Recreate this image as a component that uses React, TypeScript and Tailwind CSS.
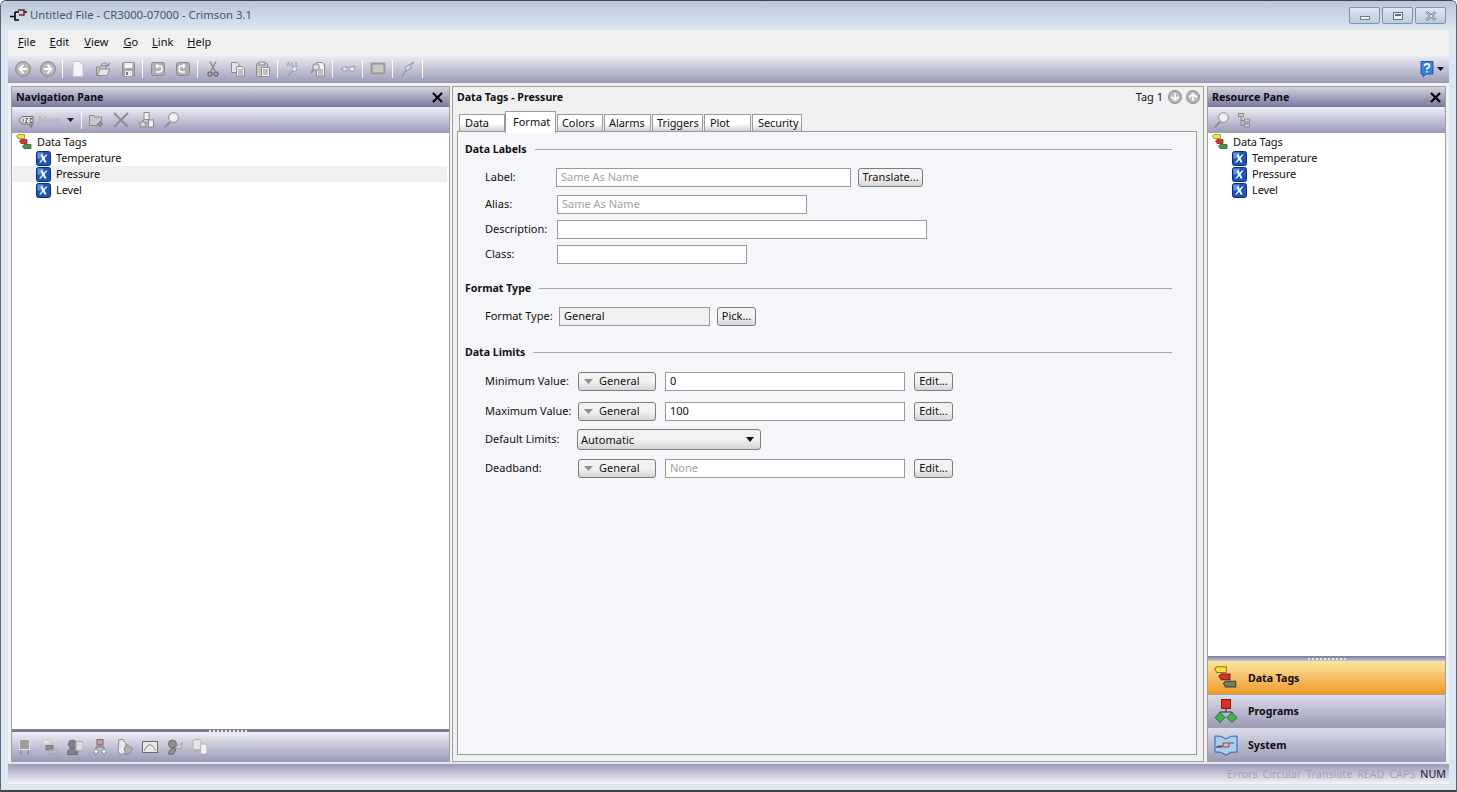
import type { ReactNode } from 'react';

const FONT = "font-['Noto_Sans','Liberation_Sans',sans-serif]";

function Gray({ children, w = 16, h = 16 }: { children: ReactNode; w?: number; h?: number }) {
  return (
    <svg width={w} height={h} viewBox={`0 0 ${w} ${h}`} fill="#cfcfcf" stroke="#8b8b8b" strokeWidth="1">
      {children}
    </svg>
  );
}

function Arrow({ dir, size = 16 }: { dir: 'left' | 'right' | 'up' | 'down'; size?: number }) {
  const rot = { left: 0, right: 180, up: 90, down: 270 }[dir];
  return (
    <svg width={size} height={size} viewBox="0 0 17 17">
      <circle cx="8.5" cy="8.5" r="8" fill="#a9a9a9" stroke="#8f8f8f" />
      <circle cx="8.5" cy="8.5" r="6.5" fill="#bcbcbc" />
      <path
        d="M9 4 L5 8.5 L9 13 M5.5 8.5 H13"
        fill="none"
        stroke="#fff"
        strokeWidth="2"
        transform={`rotate(${rot} 8.5 8.5)`}
      />
    </svg>
  );
}

const toolIcons: Record<string, ReactNode> = {
  page: <Gray><path d="M3 0.5 H10 L13 3.5 V15.5 H3 Z" fill="#f4f4f4" stroke="#c4c4c4" /></Gray>,
  open: <Gray><path d="M1.5 6 H5 L6 4.5 H11 V14.5 H1.5 Z" fill="#c4c4c4" /><path d="M2.5 14.5 L5 8 H15 L12 14.5 Z" fill="#e6e6e6" /><path d="M6 4 Q10 -1 13 5 M13 5 L14.5 2 M13 5 L10 4.5" fill="none" strokeWidth="1.2" /></Gray>,
  save: <Gray><rect x="2.5" y="1.5" width="12" height="13.5" rx="1" fill="#a9a9a9" /><rect x="4.5" y="2" width="8" height="5" fill="#f2f2f2" stroke="none" /><rect x="5" y="10" width="7" height="5" fill="#ececec" stroke="none" /><rect x="6" y="11" width="2" height="3" fill="#777" stroke="none" /></Gray>,
  undo: <Gray><rect x="1.5" y="1.5" width="13" height="13" rx="2" fill="#b0b0b0" /><path d="M6 5 H10 Q12 5 12 8 Q12 11 9 11 H6 M6 5 L8 3 M6 5 L8 7" fill="none" stroke="#fff" strokeWidth="1.4" /></Gray>,
  redo: <Gray><rect x="1.5" y="1.5" width="13" height="13" rx="2" fill="#b0b0b0" /><path d="M10 5 H6 Q4 5 4 8 Q4 11 7 11 H10 M10 5 L8 3 M10 5 L8 7" fill="none" stroke="#fff" strokeWidth="1.4" /></Gray>,
  cut: <Gray><path d="M5 0.5 L10 10 M11 0.5 L6 10" fill="none" stroke="#8a8a8a" strokeWidth="1.4" /><circle cx="5" cy="13" r="2" fill="none" stroke="#6f6f6f" strokeWidth="1.4" /><circle cx="11" cy="13" r="2" fill="none" stroke="#6f6f6f" strokeWidth="1.4" /></Gray>,
  copy: <Gray><path d="M1.5 1.5 H7 L9 3.5 V11.5 H1.5 Z" fill="#e4e4e4" /><path d="M6.5 5.5 H12 L14.5 8 V15 H6.5 Z" fill="#f0f0f0" /><path d="M8 9 H13 M8 11 H13 M8 13 H13" fill="none" /></Gray>,
  paste: <Gray><rect x="1.5" y="2.5" width="11" height="13" rx="1" fill="#c4c4c4" /><rect x="4" y="1" width="6" height="3" fill="#e2e2e2" /><path d="M6.5 6.5 H14.5 V15.5 H6.5 Z" fill="#f4f4f4" /><path d="M8 9 H13 M8 11 H13 M8 13 H13" fill="none" /></Gray>,
  findall: <Gray><path d="M9 8 L3 15" fill="none" stroke="#a4a4a4" strokeWidth="1.6" /><circle cx="9.5" cy="8" r="2.3" fill="#eee" stroke="#aaa" /><path d="M2 5 L3.5 1 L5 5 M7 1 V5 H9 M11 1 V5 H13" fill="none" stroke="#9a9a9a" /></Gray>,
  finddoc: <Gray><path d="M6.5 1.5 H12 L14.5 4 V15 H6.5 Z" fill="#f2f2f2" /><path d="M8 9 H13 M8 11 H13 M8 13 H13" fill="none" /><circle cx="6" cy="6" r="3.3" fill="#ddd" /><path d="M3.5 8.5 L1 12" fill="none" strokeWidth="1.6" /></Gray>,
  eye: <Gray><path d="M1 8 L4 6 H7 L9 7 L12 5 H15 V9 L12 11 L9 9 L7 10 H4 Z" fill="#c2c2c2" stroke="#a2a2a2" /><circle cx="4.5" cy="8" r="1.2" fill="#f4f4f4" stroke="none" /><circle cx="12" cy="8" r="1.6" fill="#f4f4f4" stroke="none" /></Gray>,
  screen: <Gray><rect x="1" y="2" width="14" height="11" fill="#8e8e8e" stroke="#a4a4a4" /><rect x="2.5" y="3.5" width="11" height="8" fill="#c8c8c8" stroke="none" /><path d="M1 14.5 H15" fill="none" stroke="#bbb" /></Gray>,
  bolt: <Gray><path d="M2 15.5 L6 9 M6 10.5 L5.5 6 L14 1 L10 5.5 L11.5 6.5 L6 10.5" fill="#ddd" stroke="#8e8e8e" /></Gray>,
  tag123: <Gray><path d="M1 8 L4 4.5 H15 V12 H4 Z" fill="#e8e8e8" stroke="#666" /><path d="M5 6.5 V10.5 M7.5 6.5 H9.5 L7.5 10.5 H9.5 M11.5 6.5 H14 L12 8.5 L14 10.5 H11.5" fill="none" stroke="#555" strokeWidth="1" /><path d="M13 12 V16 M11 14 H15" fill="none" stroke="#777" /></Gray>,
  newfolder: <Gray><path d="M1.5 3.5 H6 L7 5 H13.5 V13.5 H1.5 Z" fill="#c8c8c8" /><path d="M12 9 V15 M9 12 H15" fill="none" stroke="#8e8e8e" strokeWidth="2" /></Gray>,
  del: <Gray><path d="M1 1 L15 15 M15 1 L1 15" fill="none" stroke="#8e8e8e" strokeWidth="2" /></Gray>,
  order: <Gray><path d="M5 8 L6.3 11 H9.5 L7 13 L8 16 L5 14.3 L2 16 L3 13 L0.5 11 H3.7 Z" fill="#ddd" /><rect x="6" y="0.5" width="5" height="7" fill="#f2f2f2" /><rect x="10.5" y="8" width="5" height="7" fill="#f2f2f2" /></Gray>,
  find: <Gray><path d="M7 10 L1.5 15.5" fill="none" stroke="#8f8f8f" strokeWidth="2" /><circle cx="10.5" cy="5.5" r="4.8" fill="#f0f0f0" stroke="#8a8a8a" /></Gray>,
  treeview: <Gray w={13} h={16}><rect x="0.5" y="1.5" width="5" height="3" fill="#ccc" /><rect x="6.5" y="7" width="5" height="3" fill="#ccc" /><rect x="6.5" y="12" width="5" height="3" fill="#ccc" /><path d="M3 5 V13.5 H6 M3 8.5 H6" fill="none" /></Gray>,
  b1: <Gray><rect x="2.5" y="0.5" width="10" height="10" fill="#9f9f9f" stroke="#e4e4e4" /><path d="M4 11 V16 M11 11 V16" fill="none" stroke="#8a8a8a" strokeWidth="1.3" /></Gray>,
  b2: <Gray><rect x="1" y="1" width="7" height="4" fill="#e4e4e4" stroke="#ccc" /><rect x="4" y="6.5" width="7" height="4.5" fill="#8d8d8d" stroke="#808080" /><rect x="8" y="11" width="7.5" height="4" fill="#bcbcbc" stroke="#a4a4a4" /></Gray>,
  b3: <Gray><circle cx="5.5" cy="5" r="4" fill="#838383" stroke="#6c6c6c" /><path d="M0.5 15.5 Q0.5 9 5.5 9 Q10.5 9 10.5 15.5 Z" fill="#838383" stroke="#6c6c6c" /><rect x="9" y="2.5" width="7" height="9" fill="#ddd" stroke="#aaa" /></Gray>,
  b4: <Gray><rect x="5" y="0.5" width="6" height="5.5" fill="#aaa" stroke="#a15a50" /><path d="M8 6 V8 M4 10 V8 H12 V10" fill="none" stroke="#777" /><path d="M4 9.5 L6.5 12.5 L4 15.5 L1.5 12.5 Z M12 9.5 L14.5 12.5 L12 15.5 L9.5 12.5 Z" fill="#eee" stroke="#888" /></Gray>,
  b5: <Gray><path d="M2 0.5 H6 L9 5 V14 L3 15.5 L1 12 Z" fill="#e8e8e8" /><path d="M7 9 L11 5.5 L15.5 10 L13 14.5 L9 15.5 Z" fill="#b0b0b0" /></Gray>,
  b6: <Gray><rect x="0.5" y="2.5" width="15" height="11" fill="#e8e8e8" stroke="#6c6c6c" /><path d="M2 12 Q8 -1 14 12" fill="none" stroke="#8f8f8f" /></Gray>,
  b7: <Gray><circle cx="5.5" cy="5" r="4" fill="#909090" stroke="#6c6c6c" /><path d="M1.5 15 Q2.5 9 7 9 L9 11 L6 15.5 Z" fill="#909090" stroke="#6c6c6c" /><path d="M8 9 L15.5 3.5 L13.5 10 Z" fill="#ddd" stroke="#a0a0a0" /></Gray>,
  b8: <Gray><rect x="1" y="0.5" width="8" height="10" rx="2" fill="#e6e6e6" stroke="#b4b4b4" /><rect x="8.5" y="5" width="6.5" height="10" rx="2" fill="#f0f0f0" stroke="#b4b4b4" /></Gray>,
};

function Sep({ w = 5 }: { w?: number }) {
  return (
    <div className="flex h-[18px] justify-center" style={{ width: w }}>
      <div className="w-px bg-[#fbfbff]" />
    </div>
  );
}

function Tool({ name, w = 25 }: { name: string; w?: number }) {
  return (
    <div className="flex justify-center" style={{ width: w }}>
      {toolIcons[name]}
    </div>
  );
}

function Tags({ big }: { big?: boolean }) {
  const s = big ? 1.45 : 1;
  return (
    <svg width={16 * s} height={16 * s} viewBox="0 0 16 16">
      <path d="M0.5 2 L2 0.5 H8.5 V4.5 H2 Z" fill="#f4e23c" stroke="#8a7a20" strokeWidth="0.7" />
      <path d="M3.5 7 L5 5.5 H11 V9.5 H5 Z" fill="#d9352a" stroke="#7e1a14" strokeWidth="0.7" />
      <path d="M6.5 12 L8 10.5 H15 V14.5 H8 Z" fill={big ? '#6f7f6c' : '#3f9a52'} stroke="#30452f" strokeWidth="0.7" />
    </svg>
  );
}

function VarIcon() {
  return (
    <svg width="15" height="15" viewBox="0 0 15 15">
      <rect x="0.5" y="0.5" width="14" height="14" rx="2" fill="#1f55b5" stroke="#0c2c73" />
      <rect x="1.5" y="1.5" width="6" height="6" fill="#5f95df" />
      <path d="M4.5 3.5 H6.5 L7.8 6 L10 3.5 H11.5 L8.6 7.3 L10.5 11.5 H8.5 L7.1 8.8 L4.8 11.5 H3.2 L6.3 7.6 Z" fill="#fff" />
    </svg>
  );
}

function Tree({ iconPad, selected }: { iconPad: string; selected?: string }) {
  const kids = ['Temperature', 'Pressure', 'Level'];
  return (
    <div className={`pt-px text-[11px] leading-4 tracking-[-0.12px] text-[#101010] ${iconPad}`}>
      <div className="flex h-4 items-center gap-[5px] pl-[3px]">
        <Tags />
        <span>Data Tags</span>
      </div>
      {kids.map((k) => (
        <div key={k} className={`flex h-4 items-center gap-[5px] pl-[23px] ${k === selected ? 'bg-[#f0f0f0]' : ''}`}>
          <VarIcon />
          <span>{k}</span>
        </div>
      ))}
    </div>
  );
}

function PaneTitle({ title, pad }: { title: string; pad: string }) {
  return (
    <div className={`flex h-[20px] items-center justify-between bg-linear-to-b from-[#d4d4e2] to-[#78779a] pl-[4px] text-[10.6px] font-bold text-[#0b0b14] ${pad}`}>
      <span className="pt-[2px]">{title}</span>
      <svg width="11" height="11" viewBox="0 0 11 11">
        <path d="M1 1 L10 10 M10 1 L1 10" stroke="#000" strokeWidth="2.2" />
      </svg>
    </div>
  );
}

function Dots() {
  return (
    <div className="flex gap-[2px]">
      {[0, 1, 2, 3, 4, 5, 6, 7, 8, 9].map((i) => (
        <div key={i} className="h-[2px] w-[2px] bg-[#e6e6ee]" />
      ))}
    </div>
  );
}

function Btn({ children, className }: { children: ReactNode; className: string }) {
  return (
    <div
      className={`flex h-[19px] items-center rounded-[3px] border border-[#7c7c7c] bg-linear-to-b from-[#f2f2f2] from-50% to-[#d6d6d6] text-[11px] text-[#101010] ${className}`}
    >
      {children}
    </div>
  );
}

function Field({ value, className, dim }: { value?: string; className: string; dim?: boolean }) {
  return (
    <div
      className={`flex h-[19px] items-center border border-[#9a9a9a] px-[4px] text-[11px] ${dim ? 'text-[#a3a3a3]' : 'text-[#101010]'} ${className}`}
    >
      {value}
    </div>
  );
}

function Section({ title, className }: { title: string; className: string }) {
  return (
    <div className={`flex h-[16px] items-center gap-[8px] text-[10.6px] font-bold text-[#101010] ${className}`}>
      <span className="pt-[2px]">{title}</span>
      <div className="h-px flex-1 bg-[#a8a8a8]" />
    </div>
  );
}

function LimitRow({ label, value, dim, className }: { label: string; value: string; dim?: boolean; className: string }) {
  return (
    <div className={`flex items-center pl-[20px] ${className}`}>
      <span className="w-[93px]">{label}</span>
      <Btn className="w-[78px] gap-[6px] pl-[5px]">
        <svg width="9" height="5" viewBox="0 0 9 5"><path d="M0 0 H9 L4.5 5 Z" fill="#8f8f8f" /></svg>
        <span>General</span>
      </Btn>
      <Field value={value} dim={dim} className="ml-[9px] w-[240px] bg-white" />
      <Btn className="ml-[9px] w-[39px] justify-center">Edit...</Btn>
    </div>
  );
}

function Tab({ label, className, active }: { label: string; className: string; active?: boolean }) {
  if (active) {
    return (
      <div className={`z-10 -mb-[2px] flex h-[22px] items-start rounded-t-[1px] border border-b-0 border-[#9a9a9a] bg-white pl-[7px] pt-[2px] text-[11px] text-[#101010] ${className}`}>
        {label}
      </div>
    );
  }
  return (
    <div className={`flex h-[17px] items-center rounded-t-[1px] border border-b-0 border-[#9a9a9a] bg-linear-to-b from-white from-55% to-[#cfcfcf] text-[11px] tracking-[-0.1px] text-[#101010] ${className}`}>
      {label}
    </div>
  );
}

function WinBtn({ children, className }: { children: ReactNode; className: string }) {
  return (
    <div className={`flex h-[17px] items-center justify-center rounded-[2px] border border-[#7e94ac] bg-linear-to-b from-[#dfe8f1] to-[#bccbda] ${className}`}>
      {children}
    </div>
  );
}

function NavButton({ icon, label, className }: { icon: ReactNode; label: string; className: string }) {
  return (
    <div className={`flex items-center text-[10.6px] font-bold text-[#0b0b14] ${className}`}>
      <div className="flex w-[40px] justify-start pl-[6px]">{icon}</div>
      <span className="pt-[2px]">{label}</span>
    </div>
  );
}

export default function App() {
  return (
    <div className={`flex h-[792px] w-[1457px] flex-col overflow-hidden rounded-t-[6px] border-x border-t border-b-2 border-x-[#5c6670] border-t-[#444] border-b-[#444] bg-[#dbe7f2] ${FONT}`}>
      {/* title bar */}
      <div className="flex h-[29px] shrink-0 items-center bg-linear-to-b from-[#b8c8d7] to-[#dbe7f2] pl-[9px] pr-[10px]">
        <svg width="17" height="13" viewBox="0 0 17 13">
          <path d="M0 7.5 H5 M5 3 V11 H9 M9 3 H5 M14 3 H17" fill="none" stroke="#000" strokeWidth="1.6" />
          <path d="M8 1 H14 V6 H9" fill="none" stroke="#7c1f2c" strokeWidth="1.6" />
        </svg>
        <span className="ml-[3px] text-[11.3px] text-[#4a5560]">Untitled File - CR3000-07000 - Crimson 3.1</span>
        <div className="ml-auto flex gap-[2px]">
          <WinBtn className="w-[31px]"><div className="mt-[4px] h-[4px] w-[10px] border border-[#6c7f92] bg-[#eef3f8]" /></WinBtn>
          <WinBtn className="w-[31px]"><div className="h-[8px] w-[10px] border border-[#5c6f82] bg-[#eef3f8] p-[1px]"><div className="h-[2px] w-full bg-[#5c6f82]" /></div></WinBtn>
          <WinBtn className="w-[31px]">
            <svg width="12" height="10" viewBox="0 0 12 10"><path d="M1.5 1 L10.5 9 M10.5 1 L1.5 9" stroke="#6b7d90" strokeWidth="2.4" /><path d="M1.5 1 L10.5 9 M10.5 1 L1.5 9" stroke="#eef3f8" strokeWidth="1" /></svg>
          </WinBtn>
        </div>
      </div>

      <div className="flex min-h-0 flex-1 flex-col px-[7px]">
        {/* menu */}
        <div className="flex h-[25px] shrink-0 items-center gap-[14px] bg-[#f0f0f0] pl-[10px] text-[11px] text-[#101010]">
          <span><u>F</u>ile</span>
          <span><u>E</u>dit</span>
          <span className="ml-px"><u>V</u>iew</span>
          <span className="ml-px"><u>G</u>o</span>
          <span><u>L</u>ink</span>
          <span><u>H</u>elp</span>
        </div>

        {/* main toolbar */}
        <div className="flex h-[28px] shrink-0 items-center bg-linear-to-b from-[#eeeef6] to-[#9c9bb7] pl-[2px] pr-[5px]">
          <div className="flex w-[25px] justify-center"><Arrow dir="left" /></div>
          <div className="flex w-[25px] justify-center"><Arrow dir="right" /></div>
          <Sep />
          <Tool name="page" />
          <Tool name="open" />
          <Tool name="save" />
          <Sep />
          <Tool name="undo" />
          <Tool name="redo" />
          <Sep />
          <Tool name="cut" />
          <Tool name="copy" />
          <Tool name="paste" />
          <Sep />
          <Tool name="findall" />
          <Tool name="finddoc" />
          <Sep />
          <Tool name="eye" />
          <Sep />
          <Tool name="screen" />
          <Sep />
          <Tool name="bolt" />
          <Sep />
          <div className="ml-auto flex items-center gap-[3px]">
            <svg width="14" height="17" viewBox="0 0 14 17">
              <path d="M1 0.5 H13 V13 H6 L3 16 V13 H1 Z" fill="#3a82d8" stroke="#1c5cab" />
              <path d="M4.5 5 Q4.5 2.8 7 2.8 Q9.5 2.8 9.5 5 Q9.5 6.5 7 7.5 V8.5 M7 10 V11.5" fill="none" stroke="#fff" strokeWidth="1.7" />
            </svg>
            <svg width="7" height="4" viewBox="0 0 7 4"><path d="M0 0 H7 L3.5 4 Z" fill="#111" /></svg>
          </div>
        </div>

        {/* panes */}
        <div className="flex min-h-0 flex-1 gap-[2px] bg-[#f0f0f0] pl-[3px] pr-[2px] pt-[3px]">
          {/* navigation pane */}
          <div className="flex h-[676px] w-[439px] shrink-0 flex-col border border-[#a0a0a0] bg-white">
            <PaneTitle title="Navigation Pane" pad="pr-[6px]" />
            <div className="flex h-[26px] shrink-0 items-center bg-linear-to-b from-[#eeeef6] to-[#9c9bb7] pl-[6px] text-[11px] text-[#b4b4c0]">
              <Tool name="tag123" w={16} />
              <span className="ml-[4px] w-[29px]">New</span>
              <svg width="7" height="4" viewBox="0 0 7 4"><path d="M0 0 H7 L3.5 4 Z" fill="#222" /></svg>
              <div className="ml-[7px] mr-px"><Sep w={1} /></div>
              <Tool name="newfolder" />
              <Tool name="del" />
              <Tool name="order" />
              <Tool name="find" />
            </div>
            <div className="min-h-0 flex-1"><Tree iconPad="pl-[1px] pr-[2px]" selected="Pressure" /></div>
            <div className="flex h-[3px] shrink-0 items-center justify-end bg-[#7b7a97] pr-[202px]"><Dots /></div>
            <div className="flex h-[29px] shrink-0 items-center bg-linear-to-b from-[#eeeef6] to-[#9c9bb7]">
              {['b1', 'b2', 'b3', 'b4', 'b5', 'b6', 'b7', 'b8'].map((n) => <Tool key={n} name={n} />)}
            </div>
          </div>

          {/* center pane */}
          <div className="flex h-[676px] w-[752px] shrink-0 flex-col border border-[#a0a0a0] bg-[#f0f0f0] pb-[6px] pl-[4px] pr-[6px]">
            <div className="-mr-[3px] flex h-[20px] shrink-0 items-center justify-between text-[11px] text-[#101010]">
              <span className="pt-[2px] text-[10.6px] font-bold">Data Tags - Pressure</span>
              <div className="flex items-center gap-[4px]">
                <span className="mr-[1px]">Tag 1</span>
                <Arrow dir="down" size={14} />
                <Arrow dir="up" size={14} />
              </div>
            </div>
            <div className="mt-[4px] flex shrink-0 items-end pl-[2px]">
              <Tab label="Data" className="w-[46px] pl-[5px]" />
              <Tab label="Format" className="w-[51px]" active />
              <Tab label="Colors" className="ml-px w-[46px] pl-[4px]" />
              <Tab label="Alarms" className="ml-px w-[47px] pl-[4px]" />
              <Tab label="Triggers" className="ml-px w-[51px] pl-[4px]" />
              <Tab label="Plot" className="ml-px w-[47px] pl-[5px]" />
              <Tab label="Security" className="ml-px w-[50px] pl-[5px]" />
            </div>
            <div className="min-h-0 flex-1 border border-[#9a9a9a] bg-[#f5f6f9] pl-[7px] pr-[24px] text-[11px] text-[#101010]">
              <Section title="Data Labels" className="mt-[9px]" />
              <div className="mt-[11px] flex items-center pl-[20px]">
                <span className="w-[71px]">Label:</span>
                <Field value="Same As Name" dim className="w-[295px] bg-white" />
                <Btn className="ml-[7px] w-[65px] justify-center">Translate...</Btn>
              </div>
              <div className="mt-[8px] flex items-center pl-[20px]">
                <span className="w-[72px]">Alias:</span>
                <Field value="Same As Name" dim className="w-[250px] bg-white" />
              </div>
              <div className="mt-[6px] flex items-center pl-[20px]">
                <span className="w-[72px]">Description:</span>
                <Field className="w-[370px] bg-white" />
              </div>
              <div className="mt-[6px] flex items-center pl-[20px]">
                <span className="w-[72px]">Class:</span>
                <Field className="w-[190px] bg-white" />
              </div>
              <Section title="Format Type" className="mt-[16px]" />
              <div className="mt-[11px] flex items-center pl-[20px]">
                <span className="w-[74px]">Format Type:</span>
                <Field value="General" className="w-[151px] bg-[#f0f0f0]" />
                <Btn className="ml-[7px] w-[39px] justify-center">Pick...</Btn>
              </div>
              <Section title="Data Limits" className="mt-[18px]" />
              <LimitRow label="Minimum Value:" value="0" className="mt-[12px]" />
              <LimitRow label="Maximum Value:" value="100" className="mt-[11px]" />
              <div className="mt-[8px] flex items-center pl-[20px]">
                <span className="w-[92px]">Default Limits:</span>
                <div className="flex h-[21px] w-[184px] items-center justify-between rounded-[3px] border border-[#7c7c7c] bg-linear-to-b from-[#f2f2f2] from-50% to-[#d4d4d4] pl-[3px] pr-[6px]">
                  <span className="pt-px">Automatic</span>
                  <svg width="8" height="5" viewBox="0 0 8 5"><path d="M0 0 H8 L4 5 Z" fill="#111" /></svg>
                </div>
              </div>
              <LimitRow label="Deadband:" value="None" dim className="mt-[9px]" />
            </div>
          </div>

          {/* resource pane */}
          <div className="ml-px flex h-[676px] w-[239px] shrink-0 flex-col border border-[#a0a0a0] bg-white">
            <PaneTitle title="Resource Pane" pad="pr-[4px]" />
            <div className="flex h-[26px] shrink-0 items-center bg-linear-to-b from-[#eeeef6] to-[#9c9bb7]">
              <Tool name="find" />
              <Tool name="treeview" w={23} />
            </div>
            <div className="min-h-0 flex-1"><Tree iconPad="pl-[1px]" /></div>
            <div className="flex h-[5px] shrink-0 items-center justify-center bg-linear-to-b from-[#7b7a97] to-[#c6c6d4]"><Dots /></div>
            <NavButton
              icon={<Tags big />}
              label="Data Tags"
              className="h-[34px] shrink-0 border-b border-[#a0a0a0] bg-linear-to-b from-[#fbe59d] to-[#ef9a1c]"
            />
            <NavButton
              icon={
                <svg width="24" height="24" viewBox="0 0 24 24">
                  <rect x="7.5" y="0.5" width="9" height="9" fill="#e8291c" stroke="#7e1a14" />
                  <path d="M12 10 V13 M6 15 V13 H18 V15" fill="none" stroke="#234" />
                  <path d="M6 13.5 L11 18.5 L6 23.5 L1 18.5 Z M18 13.5 L23 18.5 L18 23.5 L13 18.5 Z" fill="#3fb54a" stroke="#1c6f2a" />
                </svg>
              }
              label="Programs"
              className="h-[33px] shrink-0 border-b border-[#a0a0a0] bg-linear-to-b from-[#dcdce8] to-[#9c9bb7]"
            />
            <NavButton
              icon={
                <svg width="24" height="22" viewBox="0 0 24 22">
                  <path d="M1 2 Q7 1 12 5 Q17 1 23 2 V18 Q17 17 12 21 Q7 17 1 18 Z" fill="#a8cdf0" stroke="#2c62a8" />
                  <path d="M4 12 H9 M9 9 H15 V13 H9 Z M15 9 H20" fill="none" stroke="#b33a3a" />
                  <path d="M2 13 H8" stroke="#222" fill="none" />
                </svg>
              }
              label="System"
              className="h-[33px] shrink-0 bg-linear-to-b from-[#dcdce8] to-[#9c9bb7]"
            />
          </div>
        </div>

        {/* status bar */}
        <div className="mt-[2px] flex h-[20px] shrink-0 items-center justify-end gap-[5px] bg-linear-to-b from-[#9c9bb7] to-[#f4f4f9] pr-[3px] text-[10.7px] text-[#a4a4b0]">
          <span>Errors</span>
          <span>Circular</span>
          <span>Translate</span>
          <span>READ</span>
          <span>CAPS</span>
          <span className="text-[#14143a]">NUM</span>
        </div>
      </div>
      <div className="h-[6px] shrink-0" />
    </div>
  );
}
